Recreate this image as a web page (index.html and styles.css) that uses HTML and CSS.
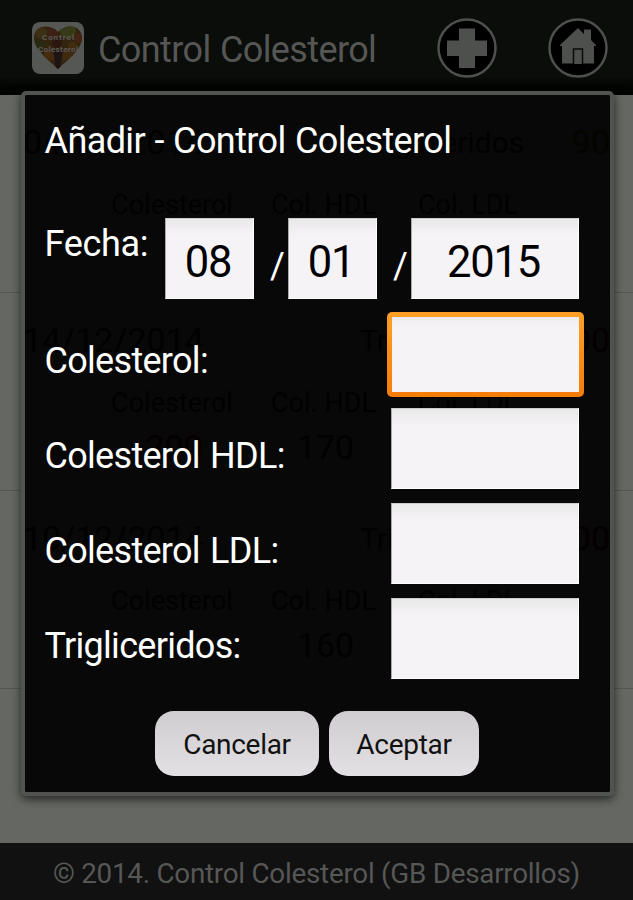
FILE: index.html
```html
<!DOCTYPE html>
<html lang="es">
  <head>
    <meta charset="UTF-8" />
    <meta name="viewport" content="width=device-width, initial-scale=1.0" />
    <title>Control Colesterol</title>
    <link rel="stylesheet" href="styles.css">
  </head>
  <body>
    <header>
      <svg class="logo" viewBox="0 0 54 54">
        <defs>
          <clipPath id="heart">
            <path d="M27 48C20 41 3 29 3 17C3 4 19 2 27 11C35 2 51 4 51 17C51 29 34 41 27 48Z" />
          </clipPath>
        </defs>
        <rect x="1" y="1" width="52" height="52" rx="8" fill="#555754" />
        <g clip-path="url(#heart)">
          <rect width="54" height="54" fill="#33240f" />
          <circle cx="10" cy="12" r="6" fill="#3c3012" />
          <circle cx="22" cy="11" r="5" fill="#3e2014" />
          <circle cx="37" cy="10" r="8" fill="#363a16" />
          <circle cx="47" cy="17" r="5" fill="#412412" />
          <circle cx="8" cy="25" r="6" fill="#262c12" />
          <circle cx="19" cy="34" r="6" fill="#452a0e" />
          <circle cx="36" cy="34" r="6" fill="#40290f" />
          <circle cx="26" cy="22" r="5" fill="#2e1610" />
          <circle cx="41" cy="25" r="4" fill="#442c10" />
          <path d="M22 29H32L29 48H25Z" fill="#1c1514" />
        </g>
        <text x="27" y="19" textLength="32">Control</text>
        <text x="27" y="31" textLength="40">Colesterol</text>
      </svg>
      <h1>Control Colesterol</h1>
      <svg class="icon" viewBox="0 0 60 60">
        <circle cx="30" cy="30" r="28.500" />
        <path d="M22 10.500H38V22.500H50V38H38V50H22V38H10V22.500H22Z" />
      </svg>
      <svg class="icon" viewBox="0 0 60 60">
        <circle cx="30" cy="30" r="28.500" />
        <path d="M30 10L36 16V11.500H43V22L48 27V28H46V45.500H14V28H12V27Z" />
        <path class="door" d="M25.500 46V31H34.500V46" />
      </svg>
    </header>

    <main>
      <div class="record">
        <div class="top"><span class="date">04/01/2014</span><span class="tri">Trigliceridos</span><span class="value amber">90</span></div>
        <div class="cols">
          <span>Colesterol</span><span>Col. HDL</span><span>Col. LDL</span>
        </div>
      </div>
      <div class="record">
        <div class="top"><span class="date">14/12/2014</span><span class="tri">Trigliceridos</span><span class="value red">300</span></div>
        <div class="cols">
          <span>Colesterol</span><span>Col. HDL</span><span>Col. LDL</span>
          <b class="red">200</b><b>170</b>
        </div>
      </div>
      <div class="record">
        <div class="top"><span class="date">10/12/2014</span><span class="tri">Trigliceridos</span><span class="value red">300</span></div>
        <div class="cols">
          <span>Colesterol</span><span>Col. HDL</span><span>Col. LDL</span>
          <b></b><b>160</b>
        </div>
      </div>
    </main>

    <footer>© 2014. Control Colesterol (GB Desarrollos)</footer>

    <div class="dialog">
      <h2>Añadir - Control Colesterol</h2>
      <div class="form">
        <div class="row date-row">
          <label>Fecha:</label>
          <input class="short" type="text" value="08" />
          <span>/</span>
          <input class="short" type="text" value="01" />
          <span>/</span>
          <input class="year" type="text" value="2015" />
        </div>
        <div class="row">
          <label>Colesterol:</label>
          <input class="active" type="text" />
        </div>
        <div class="row">
          <label>Colesterol HDL:</label>
          <input type="text" />
        </div>
        <div class="row">
          <label>Colesterol LDL:</label>
          <input type="text" />
        </div>
        <div class="row">
          <label>Trigliceridos:</label>
          <input type="text" />
        </div>
      </div>
      <div class="buttons">
        <button class="cancel">Cancelar</button>
        <button class="accept">Aceptar</button>
      </div>
    </div>
  </body>
</html>
```
FILE: styles.css
```css
* {
  box-sizing: border-box;
  margin: 0;
  padding: 0;
  font-family: Roboto, sans-serif;
}
body {
  position: relative;
  display: flex;
  flex-direction: column;
  width: 633px;
  height: 900px;
  overflow: hidden;
  background-color: #656762;
}

header {
  display: flex;
  align-items: center;
  height: 95px;
  padding: 0 25px 0 31px;
  background: linear-gradient(#0a0d09 80%, #010401 92%);
}
.logo {
  width: 54px;
  height: 54px;
}
.logo text {
  font-size: 8px;
  font-weight: 700;
  text-anchor: middle;
  fill: #5c585a;
}
h1 {
  flex: 1;
  margin-left: 13px;
  font-size: 36px;
  font-weight: 400;
  letter-spacing: -0.6px;
  word-spacing: 1px;
  line-height: 96px;
  height: 95px;
  padding-top: 2px;
  white-space: nowrap;
  color: #565755;
}
.icon {
  width: 60px;
  height: 60px;
  margin-left: 51px;
  fill: #4e504d;
}
.icon circle {
  fill: #000;
  stroke: #4e504d;
  stroke-width: 2.5;
}
.icon .door {
  fill: #4e504d;
  stroke: #0a0a0a;
  stroke-width: 1.5;
}

main {
  flex: 1;
}
.record {
  height: 198px;
  border-bottom: 1px solid #555753;
  color: #111;
}
.top {
  display: flex;
  height: 90px;
  line-height: 95px;
  padding-left: 23px;
}
.date {
  width: 337px;
  font-size: 34px;
}
.tri {
  width: 188px;
  font-size: 30px;
}
.value {
  width: 62px;
  font-size: 34px;
  text-align: right;
}
.cols {
  display: grid;
  grid-template-columns: 150px 153px 136px;
  padding-left: 97px;
  line-height: 40px;
  text-align: center;
  font-size: 27px;
}
.cols b {
  font-size: 34px;
  font-weight: 400;
  line-height: 48px;
  padding-left: 4px;
}
.red {
  color: #4a0000;
}
.amber {
  color: #4c3400;
}

footer {
  height: 57px;
  line-height: 61px;
  font-size: 27.8px;
  letter-spacing: -0.25px;
  text-align: center;
  white-space: nowrap;
  color: #565756;
  background-color: #111;
}

.dialog {
  position: absolute;
  top: 91px;
  left: 21px;
  width: 593px;
  height: 705px;
  padding: 0 31px 0 19.5px;
  border: 4px solid #50534f;
  border-radius: 5px;
  background-color: rgba(0, 0, 0, 0.925);
  background-clip: padding-box;
  box-shadow: 0 3px 10px rgba(0, 0, 0, 0.65);
  color: #fff;
}
h2 {
  margin-bottom: 31px;
  font-size: 36px;
  font-weight: 400;
  letter-spacing: -0.6px;
  word-spacing: 1px;
  line-height: 92px;
}
.form {
  display: flex;
  flex-direction: column;
  gap: 13px;
}
.row {
  display: flex;
  justify-content: space-between;
  height: 82px;
  font-size: 36px;
  letter-spacing: -0.7px;
  word-spacing: 2px;
}
label {
  line-height: 96px;
  white-space: nowrap;
}
.date-row label {
  width: 121px;
  line-height: 52px;
  letter-spacing: -0.3px;
}
.date-row span {
  width: 34px;
  padding-left: 16px;
  line-height: 96px;
}
input {
  width: 188px;
  height: 81px;
  border: 1px solid #fff;
  border-top-color: #ccc;
  border-left-color: #aaa;
  border-radius: 0;
  outline: none;
  padding: 8px 3px 0 0;
  font-size: 43.5px;
  letter-spacing: -1.2px;
  text-align: center;
  color: #000;
  background: linear-gradient(#e8e8e8, #f6f3f6 16px);
}
.short {
  width: 89px;
}
.year {
  width: 168px;
}
.active {
  width: 197px;
  height: 85px;
  margin: -1px -5px 0 0;
  border: 5px solid transparent;
  border-radius: 5px;
  background: linear-gradient(#ebebed, #f6f3f6 10px) padding-box,
    linear-gradient(#fda026, #f57c08) border-box;
}
.buttons {
  display: flex;
  gap: 10px;
  margin: 31px 0 0 110.5px;
}
button {
  height: 65px;
  border: none;
  border-radius: 19px;
  font-size: 28px;
  letter-spacing: -0.3px;
  color: #111;
  padding-top: 2px;
  background: linear-gradient(#cfcdcf, #e3e0e3);
}
.cancel {
  width: 164px;
}
.accept {
  width: 150px;
}
```
